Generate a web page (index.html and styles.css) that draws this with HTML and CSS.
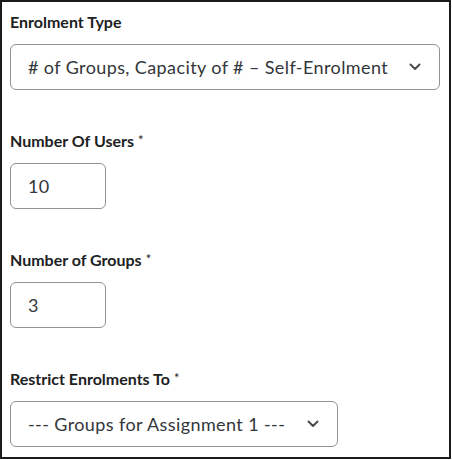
FILE: index.html
```html
<!DOCTYPE html>
<html lang="en">
<head>
<meta charset="utf-8">
<title>Enrolment</title>
<link rel="stylesheet" href="styles.css">
</head>
<body>
<div class="panel">
  <div class="field">
    <div class="label">Enrolment Type</div>
    <div class="select wide">
      <span class="value">#&nbsp;of Groups, Capacity of # – Self-Enrolment</span>
      <svg class="chev" width="12" height="8" viewBox="0 0 12 8"><path d="M1.5 1.5 L6 6 L10.5 1.5" fill="none" stroke="#494c4e" stroke-width="2" stroke-linecap="round" stroke-linejoin="round"/></svg>
    </div>
  </div>
  <div class="field">
    <div class="label">Number Of Users<span class="req">*</span></div>
    <div class="input"><span class="value">10</span></div>
  </div>
  <div class="field">
    <div class="label">Number of Groups<span class="req">*</span></div>
    <div class="input"><span class="value">3</span></div>
  </div>
  <div class="field">
    <div class="label">Restrict Enrolments To<span class="req">*</span></div>
    <div class="select narrow">
      <span class="value">--- Groups for Assignment 1 ---</span>
      <svg class="chev" width="12" height="8" viewBox="0 0 12 8"><path d="M1.5 1.5 L6 6 L10.5 1.5" fill="none" stroke="#494c4e" stroke-width="2" stroke-linecap="round" stroke-linejoin="round"/></svg>
    </div>
  </div>
</div>
</body>
</html>
```
FILE: styles.css
```css
html, body {
  margin: 0;
  padding: 0;
  background: #ffffff;
}
body {
  font-family: Lato, "Noto Sans", sans-serif;
  color: #202122;
}
.panel {
  width: 451px;
  height: 459px;
  box-sizing: border-box;
  border: 2px solid #1b1b1b;
  padding: 10px 8px;
  display: flex;
  flex-direction: column;
  gap: 41px;
}
.label {
  font-size: 16px;
  font-weight: 700;
  line-height: 20px;
  margin-bottom: 12px;
  color: #202122;
}
.req {
  font-size: 13px;
  font-weight: 400;
  vertical-align: top;
  margin-left: 4px;
  line-height: 18px;
}
.select, .input {
  box-sizing: border-box;
  height: 46px;
  border: 1px solid #8f9396;
  border-radius: 6px;
  display: flex;
  align-items: center;
  padding: 0 16px 0 17px;
  font-size: 18px;
  letter-spacing: 0.4px;
  color: #33363a;
}
.select {
  justify-content: space-between;
}
.wide {
  width: 430px;
}
.narrow {
  width: 328px;
}
.input {
  width: 96px;
}
.value {
  white-space: nowrap;
}
.chev {
  margin-right: 2px;
  flex: none;
}
```
